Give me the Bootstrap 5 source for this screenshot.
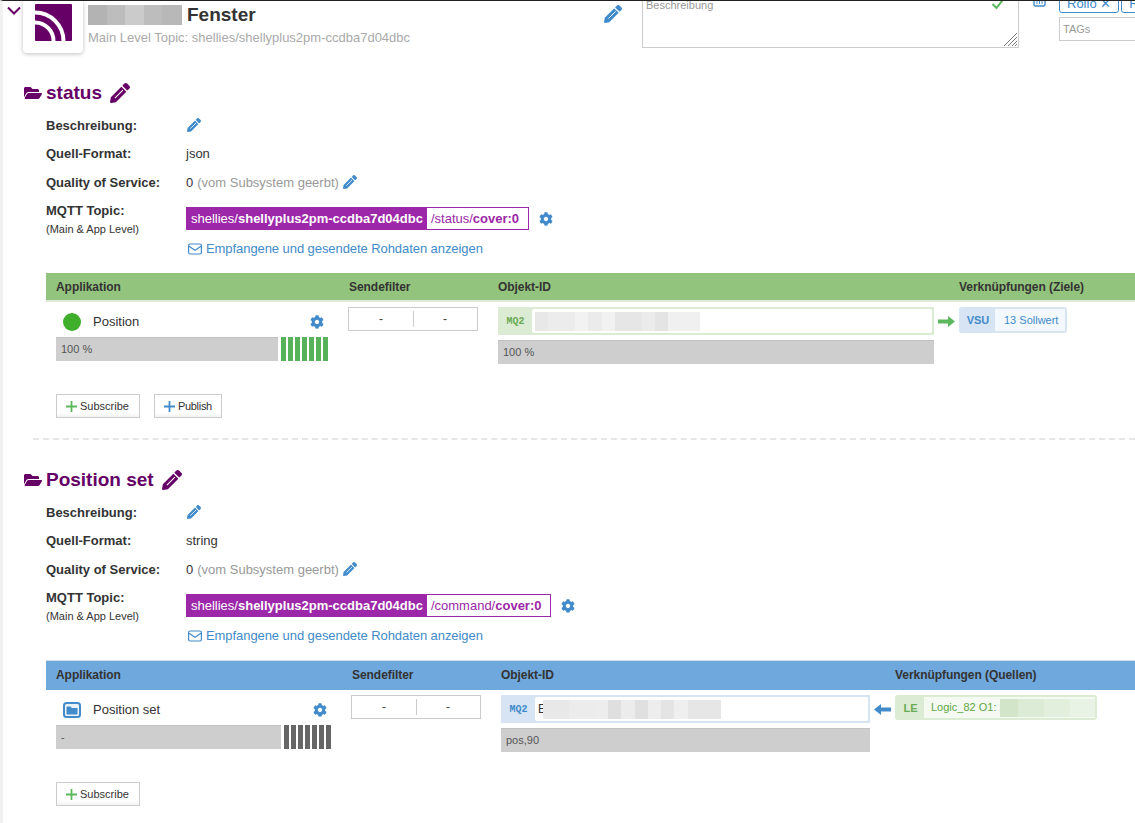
<!DOCTYPE html>
<html lang="de">
<head>
<meta charset="utf-8">
<title>Fenster</title>
<link href="https://cdn.jsdelivr.net/npm/bootstrap@5.3.0/dist/css/bootstrap.min.css" rel="stylesheet">
<style>
html,body{height:100%;overflow:hidden}
body{font-family:"Liberation Sans",Arial,sans-serif;font-size:13px;line-height:16px;color:#333;background:#fff}
svg{display:block;flex:none}
.blue-ico{fill:#428bca}
.page-frame{height:823px;overflow:hidden;border-top:1px solid #222;border-left:3px solid #f1f1f1;position:relative}
.head-band{height:53px;padding-left:3px}
.chevron-box{width:17px;padding-top:5px;flex:none}
.logo-tile{width:60px;height:52px;flex:none;background:#fff;border-radius:0 0 4px 4px;box-shadow:0 1px 4px rgba(0,0,0,.25);padding:3px 0 0 12px}
.head-text{width:521px;flex:none;padding-left:5px}
.head-title{height:29px;font-size:19px;font-weight:700;color:#333;line-height:28px;gap:5px}
.head-title .blur-tile{height:20px;margin-top:4px}
.head-sub{color:#aaa;line-height:16px}
.desc-area{width:377px;flex:none;height:48px;margin-left:20px;margin-top:-1px;border:1px solid #ccc;padding:0 3px;color:#999;font-size:11px;line-height:8px;position:relative;overflow:hidden}
.resize-grip{position:absolute;right:1px;bottom:1px}
.check-mark{position:absolute;right:13px;top:-4px}
.tag-col{margin-left:14px;flex:none}
.tag-line{height:16px;margin-top:-5px}
.tag-pill{border:1px solid #428bca;border-radius:3px;color:#428bca;height:17px;padding:0 7px;line-height:14px;margin-left:2px;white-space:nowrap;background:#fff}
.tag-first{margin-left:13px}
.tag-input{margin-left:26px;margin-top:5px;width:110px;height:24px;border:1px solid #ccc;color:#999;font-size:11px;line-height:22px;padding-left:3px;white-space:nowrap}
.sect{padding-left:20px}
.sect-two{margin-top:23px}
.sect-one{margin-top:22px}
.sect-head{height:32px;padding-top:2px;color:#660066;font-size:19px;font-weight:700;line-height:30px;gap:4px}
.sect-head svg{fill:#660066}
.folder-ico{margin-left:1px}
.pencil-big{margin-left:4px}
.prop{padding-left:23px;display:grid;grid-template-columns:140px 1fr}
.prop-key{font-weight:700;color:#333}
.prop-row-a{height:28px;padding-top:10px}
.prop-row-b{height:29px;padding-top:10px}
.prop-last{padding-top:9px}
.muted-note{color:#999}
.small-note{font-size:11px;color:#333;display:block;margin-top:4px;line-height:13px}
.topic-line{height:23px;margin-top:13px;gap:10px}
.topic-main{background:#9c27a8;color:#fff;padding:0 4px 0 5px;line-height:23px;height:23px;white-space:nowrap}
.topic-tail{border:1px solid #9c27a8;border-left:0;height:23px;line-height:21px;padding:0 9px 0 4px;color:#9c27a8;white-space:nowrap;background:#fff}
.raw-link{color:#428bca;margin-top:11px;margin-bottom:-1px;gap:4px;height:16px;letter-spacing:-.07px;white-space:nowrap}
.mail-ico{margin-left:2px}
.data-grid{display:grid;margin-left:23px;margin-top:17px;width:1089px;font-size:12px}
.grid-one{grid-template-columns:302px 150px 461px 1fr}
.grid-two{grid-template-columns:305px 150px 394px 1fr}
.grid-head{height:29px;font-weight:700;color:#333;line-height:28px;grid-column:1/-1;display:grid;grid-template-columns:subgrid;letter-spacing:-.05px}
.head-green{background:#93c47d;border-bottom:2px solid #dfe8da}
.head-blue{background:#6fa8dc;border-top:1px solid #d7e1ea;height:30px;line-height:29px}
.head-first{padding-left:10px}
.head-mid{padding-left:1px}
.cell-app{padding:5px 24px 0 10px}
.cell-app-inner{height:30px;padding-left:7px;gap:12px}
.state-dot{width:18px;height:18px;border-radius:50%;background:#3fae2a;flex:none}
.app-name{font-size:13px;color:#333}
.value-strip{height:24px;background:#cecece;border-top:1px solid #c2c2c2;padding-left:5px;line-height:22px;font-size:11px;color:#555}
.bar-row{margin-right:-4px}
.stick-set{gap:2px;margin-left:3px}
.stick-set i{width:5px;height:24px;display:block}
.stick-green i{background:#56b35a}
.stick-grey i{background:#666}
.filter-box{width:130px;height:24px;border:1px solid #ccc;display:flex;margin-top:5px;color:#444;line-height:22px;text-align:center}
.filter-box span{flex:1}
.filter-box span+span{background:linear-gradient(#ccc,#ccc) 0 3px/1px 16px no-repeat}
.obj-row{margin-top:5px;gap:4px}
.obj-wrap{width:436px;height:28px;display:flex;padding:2px;padding-left:0}
.obj-narrow{width:369px}
.obj-green{background:#dcebd3}
.obj-blue{background:#d6e4f3}
.obj-tag{width:34px;padding-left:1px;text-align:center;font-family:"Liberation Mono",monospace;font-size:10px;font-weight:700;line-height:25px;flex:none}
.tag-green{color:#6aaa53}
.tag-blue{color:#428bca}
.obj-field{flex:1;background:#fff;border-radius:2px;display:flex;align-items:center;padding:0 3px;overflow:hidden;color:#333}
.obj-value{width:436px;height:24px;margin-top:5px;background:#cecece;border-top:1px solid #c2c2c2;padding-left:5px;line-height:22px;font-size:11px;color:#555}
.obj-value-narrow{width:369px}
.blur-tile{display:flex;height:19px}
.blur-tile i{display:block;height:100%}
.link-chip{margin-top:5px;display:inline-flex;height:26px;border:2px solid;border-radius:3px}
.chip-blue{border-color:#d6e4f3;background:#d6e4f3;width:108px}
.chip-green{border-color:#dcebd3;background:#dcebd3;width:202px;height:25px}
.chip-label{width:34px;text-align:center;font-weight:700;font-size:11px;line-height:22px}
.chip-label-short{width:27px}
.chip-body{flex:1;background:#f3f8fd;color:#428bca;font-size:11px;line-height:21px;padding-left:9px;white-space:nowrap;overflow:hidden;display:flex;align-items:center}
.chip-body-green{background:#f4f9f1;color:#5fa745;padding-left:7px}
.cell-link{display:flex;align-items:flex-start}
.action-row{margin-left:33px;gap:14px}
.action-one,.action-two{margin-top:30px}
.mini-btn{height:24px;border:1px solid #ccc;background:linear-gradient(#fff 80%,#f2f2f2);color:#333;font-size:11px;line-height:22px;padding:0 10px 0 9px;display:flex;align-items:center;gap:3px;white-space:nowrap}
.mini-tight{letter-spacing:-.3px;padding-right:9px}
.dash-rule{margin:20px 0 0 10px;border-top:2px dashed #e6e6e6;height:0}
</style>
</head>
<body>
<svg width="0" height="0" style="position:absolute">
<defs>
<symbol id="i-pencil" viewBox="0 0 512 512"><path d="M497.9 142.1l-46.1 46.1c-4.7 4.7-12.3 4.7-17 0l-111-111c-4.7-4.7-4.7-12.3 0-17l46.1-46.1c18.7-18.7 49.1-18.7 67.9 0l60.1 60.1c18.8 18.7 18.8 49.1 0 67.9zM284.2 99.8L21.600 362.4.4 483.9c-2.9 16.4 11.4 30.6 27.8 27.7l121.5-21.3 262.6-262.6c3.4-3.4 3.4-8.9 0-12.4l-111.1-111c-3.5-3.4-9.1-3.4-12.6-.1z"/><path d="M125 387L330 182" stroke="#fff" stroke-width="28"/></symbol>
<symbol id="i-folder" viewBox="0 0 576 512"><path d="M572.694 292.093L500.27 416.248A63.997 63.997 0 0 1 444.989 448H45.025c-18.523 0-30.064-20.093-20.731-36.093l72.424-124.155A64 64 0 0 1 152 256h399.964c18.523 0 30.064 20.093 20.73 36.093zM152 224h328v-48c0-26.51-21.49-48-48-48H272l-64-64H48C21.49 64 0 85.49 0 112v278.046l69.077-118.418C86.214 242.25 117.989 224 152 224z"/></symbol>
<symbol id="i-cog" viewBox="0 0 512 512"><path d="M487.4 315.7l-42.6-24.6c4.3-23.2 4.3-47 0-70.2l42.6-24.6c4.9-2.8 7.1-8.6 5.5-14-11.1-35.6-30-67.8-54.7-94.6-3.8-4.1-10-5.1-14.8-2.3L380.8 110c-17.9-15.4-38.5-27.3-60.8-35.1V25.8c0-5.6-3.9-10.5-9.4-11.7-36.7-8.2-74.3-7.8-109.2 0-5.5 1.2-9.4 6.1-9.4 11.7V75c-22.2 7.9-42.8 19.8-60.8 35.1L88.7 85.5c-4.9-2.8-11-1.9-14.8 2.3-24.7 26.7-43.6 58.9-54.7 94.6-1.7 5.4.6 11.2 5.5 14L67.3 221c-4.3 23.2-4.3 47 0 70.2l-42.6 24.6c-4.9 2.8-7.1 8.6-5.5 14 11.1 35.6 30 67.8 54.7 94.6 3.8 4.1 10 5.1 14.8 2.3l42.6-24.6c17.9 15.4 38.5 27.3 60.8 35.1v49.2c0 5.6 3.9 10.5 9.4 11.7 36.7 8.2 74.3 7.8 109.2 0 5.5-1.2 9.4-6.1 9.4-11.7v-49.2c22.2-7.9 42.8-19.8 60.8-35.1l42.6 24.6c4.9 2.8 11 1.9 14.8-2.3 24.7-26.7 43.6-58.9 54.7-94.6 1.5-5.5-.7-11.3-5.6-14.1zM256 336c-44.1 0-80-35.9-80-80s35.9-80 80-80 80 35.9 80 80-35.9 80-80 80z"/></symbol>
<symbol id="i-mail" viewBox="0 0 14 12"><rect x=".6" y="1" width="12.8" height="10" rx="1.5" fill="none" stroke="#428bca" stroke-width="1.2"/><path d="M1 3.2l6 4 6-4" fill="none" stroke="#428bca" stroke-width="1.2"/></symbol>
<symbol id="i-plus" viewBox="0 0 10 10"><path d="M4.200 0h1.600v4.200H10v1.600H5.800V10H4.200V5.800H0V4.200h4.200z"/></symbol>
</defs>
</svg>
<div class="page-frame">
  <div class="head-band d-flex">
    <div class="chevron-box"><svg width="16" height="10" viewBox="0 0 16 10"><path d="M2 1.500l6 6 6-6" fill="none" stroke="#660066" stroke-width="2"/></svg></div>
    <div class="logo-tile"><svg width="37" height="37" viewBox="0 0 37 37"><rect width="37" height="37" rx="1" fill="#660066"/><path d="M0 8.500A28.500 28.500 0 0 1 28.500 37M0 18.500A18.500 18.500 0 0 1 18.500 37" fill="none" stroke="#fff" stroke-width="4"/></svg></div>
    <div class="head-text">
      <div class="head-title d-flex"><span class="blur-tile" style="width:94px"><i style="width:19px;background:#b3b3b3"></i><i style="width:18px;background:#bdbdbd"></i><i style="width:19px;background:#cbcbcb"></i><i style="width:18px;background:#bdbdbd"></i><i style="width:20px;background:#b8b8b8"></i></span><span>Fenster</span></div>
      <div class="head-sub">Main Level Topic: shellies/shellyplus2pm-ccdba7d04dbc</div>
    </div>
    <svg class="blue-ico mt-1" width="18" height="18"><use href="#i-pencil"/></svg>
    <div class="desc-area">Beschreibung
      <svg class="check-mark" width="14" height="14" viewBox="0 0 14 14"><path d="M1.500 7l4 4 7-9" fill="none" stroke="#5cb85c" stroke-width="2"/></svg>
      <svg class="resize-grip" width="14" height="14" viewBox="0 0 14 14"><path d="M1 14L14 1M5 14L14 5M9 14l5-5M12 14l2-2" stroke="#777" stroke-width="1"/></svg>
    </div>
    <div class="tag-col">
      <div class="tag-line d-flex">
        <svg width="13" height="13" viewBox="0 0 13 13"><rect x="1" y="0" width="11" height="10" rx="1.500" fill="none" stroke="#428bca" stroke-width="1.400"/><path d="M4 1v7M6.500 1v7M9 1v7" stroke="#428bca"/></svg>
        <span class="tag-pill tag-first">Rollo ✕</span><span class="tag-pill">R</span>
      </div>
      <div class="tag-input">TAGs</div>
    </div>
  </div>

  <section class="sect sect-one">
    <div class="sect-head d-flex align-items-center">
      <svg class="folder-ico" width="18" height="16"><use href="#i-folder"/></svg><span>status</span>
      <svg class="pencil-big" width="20" height="20"><use href="#i-pencil"/></svg>
    </div>
    <div class="prop">
      <div class="prop-key prop-row-a">Beschreibung:</div><div class="prop-row-a"><svg class="blue-ico" width="14" height="14" style="margin-left:1px"><use href="#i-pencil"/></svg></div>
      <div class="prop-key prop-row-b">Quell-Format:</div><div class="prop-row-b">json</div>
      <div class="prop-key prop-row-b">Quality of Service:</div><div class="prop-row-b d-flex gap-1">0 <span class="muted-note">(vom Subsystem geerbt)</span><svg class="blue-ico" width="14" height="14"><use href="#i-pencil"/></svg></div>
      <div class="prop-key prop-last">MQTT Topic:<span class="small-note fw-normal">(Main &amp; App Level)</span></div>
      <div>
        <div class="topic-line d-flex align-items-center"><div class="d-flex"><span class="topic-main">shellies/<b>shellyplus2pm-ccdba7d04dbc</b></span><span class="topic-tail">/status/<b>cover:0</b></span></div><svg class="blue-ico" width="14" height="14"><use href="#i-cog"/></svg></div>
        <div class="raw-link d-flex align-items-center"><svg class="mail-ico" width="14" height="12"><use href="#i-mail"/></svg>Empfangene und gesendete Rohdaten anzeigen</div>
      </div>
    </div>
    <div class="data-grid grid-one">
      <div class="grid-head head-green"><span class="head-first">Applikation</span><span class="head-mid">Sendefilter</span><span>Objekt-ID</span><span>Verknüpfungen (Ziele)</span></div>
      <div class="cell-app">
        <div class="cell-app-inner d-flex align-items-center"><span class="state-dot"></span><span class="app-name flex-grow-1">Position</span><svg class="blue-ico" width="14" height="14"><use href="#i-cog"/></svg></div>
        <div class="bar-row d-flex"><div class="value-strip flex-grow-1">100 %</div><div class="stick-set stick-green d-flex"><i></i><i></i><i></i><i></i><i></i><i></i><i></i></div></div>
      </div>
      <div><div class="filter-box"><span>-</span><span>-</span></div></div>
      <div>
        <div class="obj-row d-flex align-items-center">
          <div class="obj-wrap obj-green"><span class="obj-tag tag-green">MQ2</span><div class="obj-field"><span class="blur-tile" style="width:165px"><i style="width:13px;background:#e8e8e8"></i><i style="width:27px;background:#ececec"></i><i style="width:13px;background:#f2f2f2"></i><i style="width:14px;background:#ebebeb"></i><i style="width:13px;background:#f1f1f1"></i><i style="width:27px;background:#e6e6e6"></i><i style="width:13px;background:#ebebeb"></i><i style="width:13px;background:#e4e4e4"></i><i style="width:32px;background:#f0f0f0"></i></span></div></div>
          <svg width="17" height="11" viewBox="0 0 17 11"><path d="M0 3.500h10V0l7 5.500-7 5.500V7.500H0z" fill="#5cb85c"/></svg>
        </div>
        <div class="obj-value">100 %</div>
      </div>
      <div class="cell-link"><div class="link-chip chip-blue"><span class="chip-label tag-blue">VSU</span><span class="chip-body">13 Sollwert</span></div></div>
    </div>
    <div class="action-row action-one d-flex">
      <div class="mini-btn"><svg width="11" height="11" fill="#5cb85c"><use href="#i-plus"/></svg>Subscribe</div>
      <div class="mini-btn mini-tight"><svg width="11" height="11" fill="#428bca"><use href="#i-plus"/></svg>Publish</div>
    </div>
    <div class="dash-rule"></div>
  </section>

  <section class="sect sect-two">
    <div class="sect-head d-flex align-items-center">
      <svg class="folder-ico" width="18" height="16"><use href="#i-folder"/></svg><span>Position set</span>
      <svg class="pencil-big" width="20" height="20"><use href="#i-pencil"/></svg>
    </div>
    <div class="prop">
      <div class="prop-key prop-row-a">Beschreibung:</div><div class="prop-row-a"><svg class="blue-ico" width="14" height="14" style="margin-left:1px"><use href="#i-pencil"/></svg></div>
      <div class="prop-key prop-row-b">Quell-Format:</div><div class="prop-row-b">string</div>
      <div class="prop-key prop-row-b">Quality of Service:</div><div class="prop-row-b d-flex gap-1">0 <span class="muted-note">(vom Subsystem geerbt)</span><svg class="blue-ico" width="14" height="14"><use href="#i-pencil"/></svg></div>
      <div class="prop-key prop-last">MQTT Topic:<span class="small-note fw-normal">(Main &amp; App Level)</span></div>
      <div>
        <div class="topic-line d-flex align-items-center"><div class="d-flex"><span class="topic-main">shellies/<b>shellyplus2pm-ccdba7d04dbc</b></span><span class="topic-tail">/command/<b>cover:0</b></span></div><svg class="blue-ico" width="14" height="14"><use href="#i-cog"/></svg></div>
        <div class="raw-link d-flex align-items-center"><svg class="mail-ico" width="14" height="12"><use href="#i-mail"/></svg>Empfangene und gesendete Rohdaten anzeigen</div>
      </div>
    </div>
    <div class="data-grid grid-two">
      <div class="grid-head head-blue"><span class="head-first">Applikation</span><span class="head-mid">Sendefilter</span><span>Objekt-ID</span><span>Verknüpfungen (Quellen)</span></div>
      <div class="cell-app">
        <div class="cell-app-inner d-flex align-items-center"><svg width="18" height="16" viewBox="0 0 18 16"><rect x="1" y="1" width="16" height="14" rx="2.500" fill="#eaf2fa" stroke="#428bca" stroke-width="2"/><path d="M3.500 4.500h4l1.300 1.500h5.700v6.500h-11z" fill="#428bca"/></svg><span class="app-name flex-grow-1">Position set</span><svg class="blue-ico" width="14" height="14"><use href="#i-cog"/></svg></div>
        <div class="bar-row d-flex"><div class="value-strip flex-grow-1">-</div><div class="stick-set stick-grey d-flex"><i></i><i></i><i></i><i></i><i></i><i></i><i></i></div></div>
      </div>
      <div><div class="filter-box"><span>-</span><span>-</span></div></div>
      <div>
        <div class="obj-row d-flex align-items-center">
          <div class="obj-wrap obj-blue obj-narrow"><span class="obj-tag tag-blue">MQ2</span><div class="obj-field">E<span class="blur-tile" style="width:178px;margin-left:-3px"><i style="width:26px;background:#e8e8e8"></i><i style="width:26px;background:#ececec"></i><i style="width:13px;background:#ededed"></i><i style="width:13px;background:#dfdfdf"></i><i style="width:14px;background:#ececec"></i><i style="width:13px;background:#e0e0e0"></i><i style="width:13px;background:#ededed"></i><i style="width:13px;background:#e4e4e4"></i><i style="width:14px;background:#efefef"></i><i style="width:33px;background:#e6e6e6"></i></span></div></div>
          <svg width="17" height="11" viewBox="0 0 17 11"><path d="M17 3.500H7V0L0 5.500 7 11V7.500h10z" fill="#428bca"/></svg>
        </div>
        <div class="obj-value obj-value-narrow">pos,90</div>
      </div>
      <div class="cell-link"><div class="link-chip chip-green"><span class="chip-label chip-label-short tag-green">LE</span><span class="chip-body chip-body-green">Logic_82 O1:<span class="blur-tile ms-1" style="width:96px;height:18px"><i style="width:18px;background:#d2e5c9"></i><i style="width:26px;background:#dcebd5"></i><i style="width:26px;background:#e2efdc"></i><i style="width:26px;background:#e9f3e5"></i></span></span></div></div>
    </div>
    <div class="action-row action-two d-flex">
      <div class="mini-btn"><svg width="11" height="11" fill="#5cb85c"><use href="#i-plus"/></svg>Subscribe</div>
    </div>
  </section>
</div>
</body>
</html>
